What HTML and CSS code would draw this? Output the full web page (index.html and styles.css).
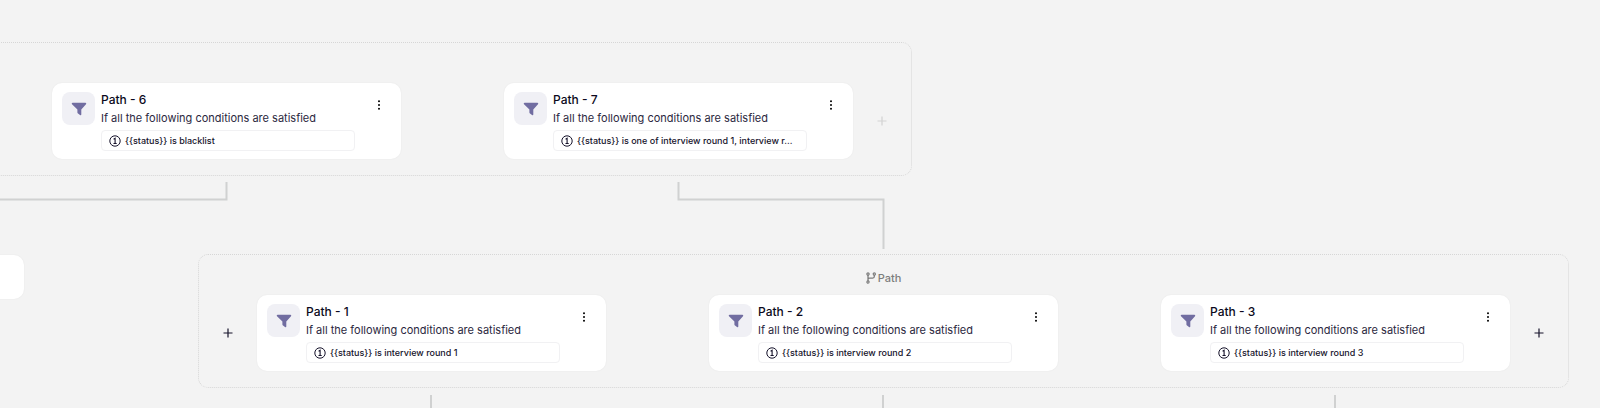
FILE: index.html
```
<!DOCTYPE html>
<html lang="en">
<head>
    <meta charset="UTF-8">
    <meta name="viewport" content="width=device-width, initial-scale=1.0">
    <title>Workflow</title>
    <link rel="stylesheet" href="styles.css">
</head>
<body>
    <!-- shared icons -->
    <svg class="sprite" aria-hidden="true">
        <symbol id="funnel" viewBox="0 0 16 14">
            <path d="M1.6 0.8h12.8c0.8 0 1.1 0.8 0.6 1.4L10.3 7.6v4.9c0 0.8-0.7 1-1.3 0.6l-2-1.6c-0.4-0.3-0.6-0.6-0.6-1V7.6L1 2.2c-0.5-0.6-0.2-1.4 0.6-1.4z" fill="#716da1"/>
        </symbol>
        <symbol id="one" viewBox="0 0 12 12">
            <circle cx="6" cy="6" r="5.2" fill="none" stroke="#16132b"/>
            <path d="M4.6 4.2L6.1 3.3V8.4M4.5 8.5h3.2" fill="none" stroke="#16132b" stroke-width="1.1"/>
        </symbol>
        <symbol id="dots" viewBox="0 0 4 12">
            <circle cx="2" cy="2.3" r="1"/>
            <circle cx="2" cy="6" r="1"/>
            <circle cx="2" cy="9.7" r="1"/>
        </symbol>
        <symbol id="plus" viewBox="0 0 10 10">
            <path d="M5 0.5v9M0.5 5h9" fill="none" stroke="currentColor" stroke-width="1.2"/>
        </symbol>
        <symbol id="branch" viewBox="0 0 10 12">
            <path d="M2 3v6M8.3 3v1.6c0 1-0.6 1.5-1.6 1.5H3.6C2.6 6.1 2 6.6 2 7.6" fill="none" stroke="currentColor" stroke-width="1.3"/>
            <circle cx="2" cy="2" r="1.1" fill="none" stroke="currentColor" stroke-width="1.2"/>
            <circle cx="8.3" cy="2" r="1.1" fill="none" stroke="currentColor" stroke-width="1.2"/>
            <circle cx="2" cy="10" r="1.1" fill="none" stroke="currentColor" stroke-width="1.2"/>
        </symbol>
    </svg>

    <main class="canvas">
        <svg class="lines" aria-hidden="true">
            <path d="M226.5 182V199.5H-5"/>
            <path d="M678.5 182V199.5H883.5V249"/>
            <path d="M431 395V420M883 395V420M1335 395V420"/>
        </svg>

        <section class="group group-top">
            <div class="label"></div>
            <div class="row">
                <article class="card">
                    <div class="tile"><svg><use href="#funnel"/></svg></div>
                    <div class="info">
                        <h2>Path - 6</h2>
                        <p>If all the following conditions are satisfied</p>
                        <div class="rule"><svg><use href="#one"/></svg><span>{{status}} is blacklist</span></div>
                    </div>
                    <button class="more" aria-label="More options"><svg><use href="#dots"/></svg></button>
                </article>
                <article class="card">
                    <div class="tile"><svg><use href="#funnel"/></svg></div>
                    <div class="info">
                        <h2>Path - 7</h2>
                        <p>If all the following conditions are satisfied</p>
                        <div class="rule"><svg><use href="#one"/></svg><span>{{status}} is one of interview round 1, interview r...</span></div>
                    </div>
                    <button class="more" aria-label="More options"><svg><use href="#dots"/></svg></button>
                </article>
            </div>
            <button class="add" aria-label="Add path" disabled><svg><use href="#plus"/></svg></button>
        </section>

        <div class="stub"></div>

        <section class="group group-bottom">
            <div class="label"><svg><use href="#branch"/></svg>Path</div>
            <button class="add" aria-label="Add path before"><svg><use href="#plus"/></svg></button>
            <div class="row">
                <article class="card">
                    <div class="tile"><svg><use href="#funnel"/></svg></div>
                    <div class="info">
                        <h2>Path - 1</h2>
                        <p>If all the following conditions are satisfied</p>
                        <div class="rule"><svg><use href="#one"/></svg><span>{{status}} is interview round 1</span></div>
                    </div>
                    <button class="more" aria-label="More options"><svg><use href="#dots"/></svg></button>
                </article>
                <article class="card">
                    <div class="tile"><svg><use href="#funnel"/></svg></div>
                    <div class="info">
                        <h2>Path - 2</h2>
                        <p>If all the following conditions are satisfied</p>
                        <div class="rule"><svg><use href="#one"/></svg><span>{{status}} is interview round 2</span></div>
                    </div>
                    <button class="more" aria-label="More options"><svg><use href="#dots"/></svg></button>
                </article>
                <article class="card">
                    <div class="tile"><svg><use href="#funnel"/></svg></div>
                    <div class="info">
                        <h2>Path - 3</h2>
                        <p>If all the following conditions are satisfied</p>
                        <div class="rule"><svg><use href="#one"/></svg><span>{{status}} is interview round 3</span></div>
                    </div>
                    <button class="more" aria-label="More options"><svg><use href="#dots"/></svg></button>
                </article>
            </div>
            <button class="add" aria-label="Add path after"><svg><use href="#plus"/></svg></button>
        </section>
    </main>
</body>
</html>
```
FILE: styles.css
```
* {
    box-sizing: border-box;
}

body {
    margin: 0;
    font-family: Inter, "Open Sans", sans-serif;
    color: #16132b;
    background: #f3f3f3;
}

button {
    padding: 0;
    border: 0;
    color: inherit;
    background: none;
    cursor: pointer;
}

svg {
    display: block;
}

.sprite {
    position: absolute;
    width: 0;
    height: 0;
}

.canvas {
    position: relative;
    height: 100vh;
    overflow: hidden;
}

.lines {
    position: absolute;
    left: 0;
    top: 0;
    width: 100%;
    height: 100%;
    fill: none;
    stroke: #d0d1d1;
    stroke-width: 2;
}

/* groups are placed on the canvas, the content inside flows */
.group {
    position: absolute;
    display: grid;
    grid-template-rows: 40px auto;
    padding-bottom: 16px;
    border: 1px dotted #d6d6d6;
    border-radius: 10px;
}

.group-top {
    left: -51px;
    top: 42px;
    grid-template-columns: auto 58px;
    padding-left: 102px;
}

.group-bottom {
    left: 198px;
    top: 254px;
    grid-template-columns: 58px auto 58px;
}

.label {
    grid-column: 1 / -1;
    display: flex;
    align-items: center;
    justify-content: center;
    gap: 2px;
    padding-top: 6px;
    font-size: 11px;
    font-weight: 500;
    color: #7d7d7d;
}

.label svg {
    width: 10px;
    height: 12px;
}

.row {
    display: flex;
    gap: 103px;
}

.add {
    display: grid;
    place-items: center;
}

.add:disabled {
    color: #d3d3d3;
    cursor: default;
}

.add svg {
    width: 10px;
    height: 10px;
}

.card {
    display: flex;
    gap: 6px;
    width: 349px;
    padding: 9px 20px 8px 10px;
    border-radius: 10px;
    background: #fff;
    box-shadow: 0 0 2px rgba(0, 0, 0, 0.06);
}

.tile {
    display: grid;
    place-items: center;
    width: 33px;
    height: 33px;
    border-radius: 8px;
    background: #f0f0f5;
}

.tile svg {
    width: 16px;
    height: 14px;
}

.info {
    width: 254px;
}

.info h2 {
    margin: 0;
    font-size: 12px;
    font-weight: 500;
    line-height: 16px;
    color: #0c0920;
}

.info p {
    margin: 2px 0 3px;
    font-size: 11px;
    line-height: 17px;
    color: #2b2840;
}

.rule {
    display: flex;
    align-items: center;
    gap: 4px;
    height: 21px;
    padding: 0 7px;
    border: 1px solid #f1f1f3;
    border-radius: 4px;
    font-size: 9px;
    font-weight: 500;
    white-space: nowrap;
}

.rule svg {
    width: 12px;
    height: 12px;
}

.more {
    align-self: flex-start;
    margin: 7px 0 0 auto;
}

.more svg {
    width: 4px;
    height: 12px;
}

/* end of a neighbouring node */
.stub {
    position: absolute;
    left: -20px;
    top: 255px;
    width: 44px;
    height: 44px;
    border-radius: 10px;
    background: #fff;
    box-shadow: 0 0 2px rgba(0, 0, 0, 0.06);
}
```
